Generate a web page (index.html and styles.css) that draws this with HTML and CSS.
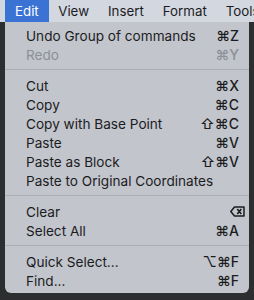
FILE: index.html
```html
<!DOCTYPE html>
<html lang="en">
  <head>
    <meta charset="UTF-8" />
    <title>Edit menu</title>
    <link rel="stylesheet" href="styles.css">
  </head>
  <body>
    <div class="menubar">
      <span class="menubar-item active">Edit</span>
      <span class="menubar-item">View</span>
      <span class="menubar-item">Insert</span>
      <span class="menubar-item">Format</span>
      <span class="menubar-item">Tools</span>
    </div>

    <div class="menu">
      <div class="item"><span>Undo Group of commands</span><span class="key">⌘Z</span></div>
      <div class="item disabled"><span>Redo</span><span class="key">⌘Y</span></div>
      <div class="sep"></div>
      <div class="item"><span>Cut</span><span class="key">⌘X</span></div>
      <div class="item"><span>Copy</span><span class="key">⌘C</span></div>
      <div class="item"><span>Copy with Base Point</span><span class="key">⇧⌘C</span></div>
      <div class="item"><span>Paste</span><span class="key">⌘V</span></div>
      <div class="item"><span>Paste as Block</span><span class="key">⇧⌘V</span></div>
      <div class="item"><span>Paste to Original Coordinates</span></div>
      <div class="sep"></div>
      <div class="item">
        <span>Clear</span>
        <svg class="del" width="15" height="11" viewBox="0 0 15 11">
          <path d="M4.5 1 H14 V10 H4.5 L0.8 5.5 Z" fill="none" stroke="#1c1c1e" stroke-width="1.5" stroke-linejoin="round"/>
          <path d="M7.3 3 L11.3 8 M11.3 3 L7.3 8" stroke="#1c1c1e" stroke-width="1.6"/>
        </svg>
      </div>
      <div class="item"><span>Select All</span><span class="key">⌘A</span></div>
      <div class="sep"></div>
      <div class="item"><span>Quick Select...</span><span class="key">⌥⌘F</span></div>
      <div class="item"><span>Find...</span><span class="key">⌘F</span></div>
    </div>
  </body>
</html>
```

FILE: styles.css
```css
body {
  margin: 0;
  background-color: #2c2e30;
  font-family: "Inter", "Liberation Sans", sans-serif;
  font-size: 13.6px;
  color: #1c1c1e;
  height: 300px;
  overflow: hidden;
}
.menubar {
  display: flex;
  height: 22px;
  background-color: #d3d7e0;
  font-size: 13.3px;
  white-space: nowrap;
  overflow: hidden;
}
.menubar-item {
  padding: 0 9.5px;
  line-height: 22px;
}
.menubar-item.active {
  margin-left: 5px;
  padding: 0 10px;
  background-color: #3b73d4;
  color: #fff;
}
.menu {
  margin: 0 5px;
  padding: 4px 0 3px;
  background-color: #c2c5cc;
  border-radius: 0 0 6px 6px;
}
.item {
  display: flex;
  justify-content: space-between;
  align-items: center;
  height: 19px;
  padding: 0 10px 0 21px;
  white-space: nowrap;
}
.item.disabled {
  color: #8d9097;
}
.key {
  font-family: "Inter", "DejaVu Sans", sans-serif;
  font-size: 14px;
  font-weight: 500;
}
.del {
  margin-right: -6px;
}
.sep {
  height: 1px;
  margin: 5px 0 6px;
  background-color: #aaaeb5;
}
```
